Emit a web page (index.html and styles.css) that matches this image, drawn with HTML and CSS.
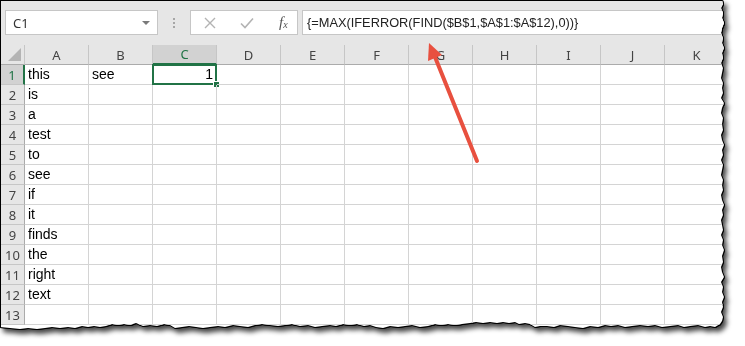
FILE: index.html
```html
<!DOCTYPE html>
<html lang="en">
<head>
    <meta charset="UTF-8">
    <title>Book1 - Excel</title>
    <link rel="stylesheet" href="styles.css">
</head>
<body>
    <div class="frame">
        <div class="sheet">
            <div class="formula-bar">
                <div class="name-box">
                    <span>C1</span>
                    <span class="caret"></span>
                </div>
                <div class="grip"><i></i><i></i><i></i></div>
                <div class="fx-box">
                    <svg class="ico" width="14" height="14" viewBox="0 0 14 14"><path d="M2 2 L12 12 M12 2 L2 12" stroke="#b3b3b3" stroke-width="1.4" fill="none"/></svg>
                    <svg class="ico" width="16" height="14" viewBox="0 0 16 14"><path d="M2 7.5 L6 11.5 L14 2.5" stroke="#b3b3b3" stroke-width="1.6" fill="none"/></svg>
                    <span class="fx">f<sub>x</sub></span>
                </div>
                <div class="formula">{=MAX(IFERROR(FIND($B$1,$A$1:$A$12),0))}</div>
            </div>

            <div class="grid">
                <div class="corner"></div>
                <div class="ch">A</div><div class="ch">B</div><div class="ch active">C</div><div class="ch">D</div><div class="ch">E</div><div class="ch">F</div><div class="ch">G</div><div class="ch">H</div><div class="ch">I</div><div class="ch">J</div><div class="ch">K</div>

                <div class="rh active">1</div><div class="c">this</div><div class="c">see</div><div class="c num sel">1<span class="handle"></span></div><div class="c"></div><div class="c"></div><div class="c"></div><div class="c"></div><div class="c"></div><div class="c"></div><div class="c"></div><div class="c"></div>
                <div class="rh">2</div><div class="c">is</div><div class="c"></div><div class="c"></div><div class="c"></div><div class="c"></div><div class="c"></div><div class="c"></div><div class="c"></div><div class="c"></div><div class="c"></div><div class="c"></div>
                <div class="rh">3</div><div class="c">a</div><div class="c"></div><div class="c"></div><div class="c"></div><div class="c"></div><div class="c"></div><div class="c"></div><div class="c"></div><div class="c"></div><div class="c"></div><div class="c"></div>
                <div class="rh">4</div><div class="c">test</div><div class="c"></div><div class="c"></div><div class="c"></div><div class="c"></div><div class="c"></div><div class="c"></div><div class="c"></div><div class="c"></div><div class="c"></div><div class="c"></div>
                <div class="rh">5</div><div class="c">to</div><div class="c"></div><div class="c"></div><div class="c"></div><div class="c"></div><div class="c"></div><div class="c"></div><div class="c"></div><div class="c"></div><div class="c"></div><div class="c"></div>
                <div class="rh">6</div><div class="c">see</div><div class="c"></div><div class="c"></div><div class="c"></div><div class="c"></div><div class="c"></div><div class="c"></div><div class="c"></div><div class="c"></div><div class="c"></div><div class="c"></div>
                <div class="rh">7</div><div class="c">if</div><div class="c"></div><div class="c"></div><div class="c"></div><div class="c"></div><div class="c"></div><div class="c"></div><div class="c"></div><div class="c"></div><div class="c"></div><div class="c"></div>
                <div class="rh">8</div><div class="c">it</div><div class="c"></div><div class="c"></div><div class="c"></div><div class="c"></div><div class="c"></div><div class="c"></div><div class="c"></div><div class="c"></div><div class="c"></div><div class="c"></div>
                <div class="rh">9</div><div class="c">finds</div><div class="c"></div><div class="c"></div><div class="c"></div><div class="c"></div><div class="c"></div><div class="c"></div><div class="c"></div><div class="c"></div><div class="c"></div><div class="c"></div>
                <div class="rh">10</div><div class="c">the</div><div class="c"></div><div class="c"></div><div class="c"></div><div class="c"></div><div class="c"></div><div class="c"></div><div class="c"></div><div class="c"></div><div class="c"></div><div class="c"></div>
                <div class="rh">11</div><div class="c">right</div><div class="c"></div><div class="c"></div><div class="c"></div><div class="c"></div><div class="c"></div><div class="c"></div><div class="c"></div><div class="c"></div><div class="c"></div><div class="c"></div>
                <div class="rh">12</div><div class="c">text</div><div class="c"></div><div class="c"></div><div class="c"></div><div class="c"></div><div class="c"></div><div class="c"></div><div class="c"></div><div class="c"></div><div class="c"></div><div class="c"></div>
                <div class="rh">13</div><div class="c"></div><div class="c"></div><div class="c"></div><div class="c"></div><div class="c"></div><div class="c"></div><div class="c"></div><div class="c"></div><div class="c"></div><div class="c"></div><div class="c"></div>
            </div>
        </div>
    </div>

    <!-- callout arrow pointing at the formula -->
    <svg class="arrow" width="745" height="346" viewBox="0 0 745 346">
        <line x1="477" y1="161" x2="435" y2="57" stroke="#e8503f" stroke-width="4" stroke-linecap="round"/>
        <polygon points="429,43 442,55 428,61" fill="#e8503f"/>
    </svg>
</body>
</html>
```

FILE: styles.css
```css
:root {
    --grid-line: #d4d4d4;
    --head-bg: #e6e6e6;
    --head-line: #c6c6c6;
    --excel-green: #217346;
}

* {
    box-sizing: border-box;
}

body {
    margin: 0;
    width: 745px;
    height: 346px;
    background: #fff;
    overflow: hidden;
    font-family: "Liberation Sans", Arial, sans-serif;
}

/* torn paper edge: crisp black outline, then a soft grey shadow */
.frame {
    width: 740px;
    filter: drop-shadow(1px 0 0 #000) drop-shadow(0 1px 0 #000) drop-shadow(3px 4px 2.5px rgba(0,0,0,0.72));
}

.sheet {
    width: 740px;
    height: 332px;
    background: #fff;
    border-top: 1px solid #000;
    border-left: 1px solid #000;
    overflow: hidden;
    clip-path: polygon(0 0, 722px 0, 723px 4px, 721px 8px, 723px 13px, 722px 18px, 724px 23px, 722px 28px, 721px 33px, 723px 38px, 722px 43px, 724px 48px, 722px 53px, 723px 58px, 721px 63px, 723px 68px, 722px 73px, 721px 78px, 723px 83px, 722px 88px, 723px 93px, 721px 98px, 724px 103px, 722px 108px, 721px 113px, 723px 118px, 722px 124px, 723px 130px, 721px 135px, 722px 140px, 724px 145px, 722px 150px, 723px 155px, 721px 160px, 723px 165px, 722px 170px, 721px 175px, 723px 180px, 722px 185px, 723px 190px, 721px 195px, 722px 200px, 724px 205px, 722px 210px, 723px 215px, 721px 220px, 722px 225px, 723px 230px, 721px 235px, 723px 240px, 722px 245px, 724px 250px, 722px 256px, 723px 262px, 721px 267px, 722px 272px, 724px 277px, 721px 282px, 723px 287px, 722px 292px, 724px 297px, 722px 302px, 723px 307px, 721px 312px, 723px 317px, 722px 321px, 720px 324px, 715px 327px, 710px 326px, 705px 327px, 698px 325px, 690px 326px, 684px 327px, 678px 325px, 670px 326px, 662px 327px, 655px 325px, 648px 326px, 640px 325px, 632px 326px, 625px 327px, 618px 325px, 611px 326px, 605px 325px, 598px 327px, 590px 326px, 583px 328px, 575px 327px, 568px 326px, 560px 325px, 554px 327px, 547px 326px, 540px 326px, 535px 327px, 530px 324px, 525px 323px, 519px 324px, 515px 322px, 509px 323px, 503px 322px, 497px 323px, 490px 322px, 483px 323px, 476px 322px, 470px 323px, 462px 324px, 455px 325px, 448px 324px, 441px 325px, 435px 324px, 428px 326px, 420px 327px, 412px 325px, 405px 326px, 398px 327px, 390px 326px, 383px 328px, 376px 327px, 370px 325px, 364px 326px, 357px 324px, 350px 325px, 343px 324px, 336px 326px, 330px 325px, 322px 326px, 315px 327px, 308px 325px, 300px 326px, 292px 324px, 285px 325px, 278px 326px, 270px 325px, 262px 324px, 255px 325px, 248px 327px, 240px 326px, 233px 325px, 225px 327px, 218px 326px, 210px 327px, 203px 328px, 196px 327px, 189px 326px, 182px 327px, 175px 328px, 170px 325px, 164px 324px, 157px 326px, 150px 325px, 143px 326px, 136px 323px, 130px 325px, 124px 324px, 118px 325px, 112px 324px, 106px 326px, 100px 327px, 94px 326px, 88px 327px, 82px 326px, 75px 328px, 68px 327px, 60px 328px, 52px 327px, 45px 328px, 37px 329px, 28px 328px, 20px 329px, 10px 328px, 0 327px);
}

/* formula bar */
.formula-bar {
    display: flex;
    align-items: center;
    height: 44px;
    padding: 9px 0 10px 4px;
    background: var(--head-bg);
}

.name-box {
    display: flex;
    align-items: center;
    justify-content: space-between;
    width: 153px;
    height: 25px;
    padding: 0 7px 0 7px;
    background: #fff;
    border: 1px solid var(--head-line);
    font-family: "Noto Sans", sans-serif;
    font-size: 13px;
    color: #333;
}

.caret {
    width: 0;
    height: 0;
    border-left: 4px solid transparent;
    border-right: 4px solid transparent;
    border-top: 4px solid #7a7a7a;
}

.grip {
    display: flex;
    flex-direction: column;
    gap: 2px;
    width: 32px;
    align-items: center;
}

.grip i {
    width: 2px;
    height: 2px;
    background: #a6a6a6;
}

.fx-box {
    display: flex;
    align-items: center;
    width: 108px;
    height: 25px;
    padding: 0 8px 0 12px;
    gap: 22px;
    background: #fff;
    border: 1px solid var(--head-line);
}

.fx {
    font-family: "Liberation Serif", serif;
    font-style: italic;
    font-size: 15px;
    color: #555;
    margin-left: 2px;
}

.fx sub {
    font-size: 10px;
    vertical-align: -1px;
}

.formula {
    flex: 1;
    height: 25px;
    margin-left: 4px;
    padding: 4px 4px 0 4px;
    background: #fff;
    border: 1px solid var(--head-line);
    font-size: 12.8px;
    color: #222;
    white-space: nowrap;
}

/* cell grid */
.grid {
    display: grid;
    grid-template-columns: 24px repeat(11, 64px);
    grid-auto-rows: 20px;
}

.corner {
    position: relative;
    background: var(--head-bg);
    border-right: 1px solid var(--head-line);
    border-bottom: 1px solid #ababab;
}

.corner::after {
    content: "";
    position: absolute;
    right: 3px;
    bottom: 3px;
    border-left: 13px solid transparent;
    border-bottom: 13px solid #b4b4b4;
}

.ch {
    display: flex;
    align-items: center;
    justify-content: center;
    background: var(--head-bg);
    border-right: 1px solid var(--head-line);
    border-bottom: 1px solid #ababab;
    font-family: "Noto Sans", sans-serif;
    font-size: 13px;
    color: #444;
}

.ch.active {
    background: #d2d2d2;
    color: var(--excel-green);
    border-bottom: 2px solid var(--excel-green);
}

.rh {
    display: flex;
    align-items: center;
    justify-content: center;
    background: var(--head-bg);
    border-right: 1px solid #ababab;
    border-bottom: 1px solid var(--head-line);
    font-family: "Noto Sans", sans-serif;
    font-size: 13px;
    color: #444;
}

.rh.active {
    background: #d2d2d2;
    color: var(--excel-green);
    border-right: 2px solid var(--excel-green);
}

.c {
    position: relative;
    display: flex;
    align-items: flex-end;
    padding: 0 3px 1px 3px;
    border-right: 1px solid var(--grid-line);
    border-bottom: 1px solid var(--grid-line);
    font-size: 14px;
    line-height: 17px;
    color: #000;
}

.c.num {
    justify-content: flex-end;
}

.c.sel::before {
    content: "";
    position: absolute;
    top: -1px;
    left: -1px;
    right: -1px;
    bottom: -1px;
    border: 2px solid var(--excel-green);
}

.handle {
    position: absolute;
    right: -4px;
    bottom: -4px;
    width: 7px;
    height: 7px;
    background: var(--excel-green);
    border: 1px solid #fff;
}

.arrow {
    position: absolute;
    top: 0;
    left: 0;
    pointer-events: none;
}
```
